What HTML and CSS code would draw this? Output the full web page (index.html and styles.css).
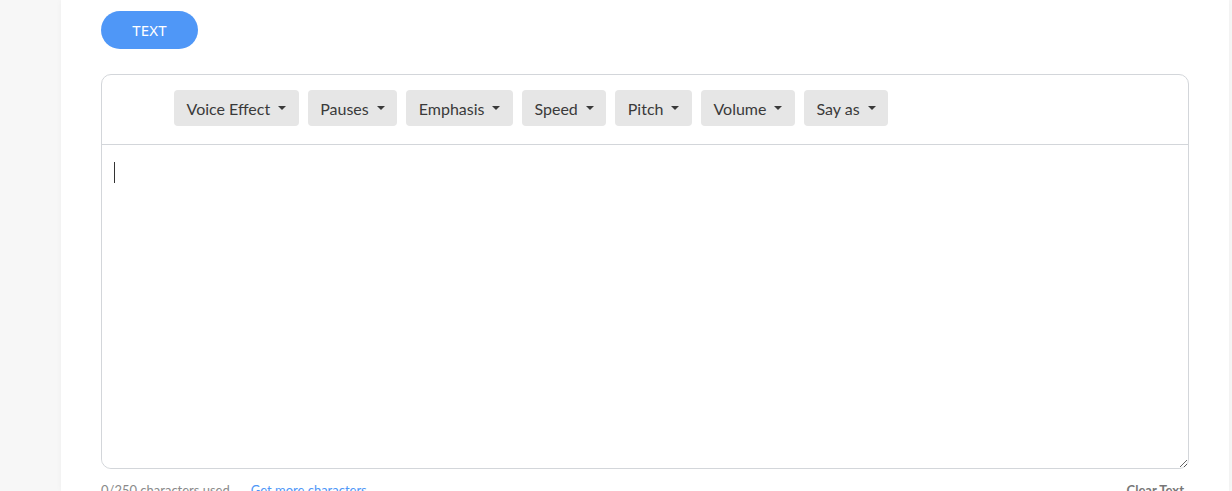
FILE: index.html
```html
<!DOCTYPE html>
<html lang="en">
<head>
<meta charset="utf-8">
<title>Text editor</title>
<link rel="stylesheet" href="styles.css">
</head>
<body>
<div class="page">
  <main class="card">
    <button class="pill" type="button">TEXT</button>
    <section class="editor">
      <div class="toolbar">
        <button class="tool" type="button">Voice Effect<span class="caret"></span></button>
        <button class="tool" type="button">Pauses<span class="caret"></span></button>
        <button class="tool" type="button">Emphasis<span class="caret"></span></button>
        <button class="tool" type="button">Speed<span class="caret"></span></button>
        <button class="tool" type="button">Pitch<span class="caret"></span></button>
        <button class="tool" type="button">Volume<span class="caret"></span></button>
        <button class="tool" type="button">Say as<span class="caret"></span></button>
      </div>
      <div class="body">
        <textarea class="input" autofocus></textarea>
        <span class="cursor"></span>
      </div>
    </section>
    <div class="footer">
      <div class="count">
        <span class="used">0/250 characters used</span>
        <a class="more" href="#">Get more characters</a>
      </div>
      <span class="clear">Clear Text</span>
    </div>
  </main>
</div>
</body>
</html>
```
FILE: styles.css
```css
html, body {
  margin: 0;
  padding: 0;
  height: 100%;
  overflow: hidden;
}
body {
  background: #f7f7f7;
  font-family: Lato, "Noto Sans", sans-serif;
}
.page {
  display: flex;
  padding-left: 61px;
  height: 100%;
}
.card {
  width: 1168px;
  background: #fff;
  box-shadow: 0 0 6px rgba(0, 0, 0, 0.04);
  padding: 11px 40px 0 40px;
  box-sizing: border-box;
  display: flex;
  flex-direction: column;
  align-items: flex-start;
}
.card > * {
  flex-shrink: 0;
}
.pill {
  width: 97px;
  height: 38px;
  border: none;
  border-radius: 19px;
  background: #4f97f7;
  color: #fff;
  font-family: "Noto Sans", sans-serif;
  font-size: 15px;
  letter-spacing: 0.2px;
  cursor: pointer;
}
.editor {
  margin-top: 25px;
  width: 1088px;
  border: 1px solid #d3d6da;
  border-radius: 10px;
  display: flex;
  flex-direction: column;
  box-sizing: border-box;
}
.toolbar {
  display: flex;
  gap: 9px;
  padding: 15px 0 18px 72px;
  border-bottom: 1px solid #d3d6da;
}
.tool {
  height: 36px;
  display: flex;
  align-items: center;
  gap: 8px;
  padding: 0 12.5px;
  border: none;
  border-radius: 4px;
  background: #e6e6e6;
  color: #3a3a3a;
  font-family: Lato, "Noto Sans", sans-serif;
  font-size: 16px;
  cursor: pointer;
}
.caret {
  width: 0;
  height: 0;
  border-left: 4px solid transparent;
  border-right: 4px solid transparent;
  border-top: 4px solid #3a3a3a;
}
.body {
  position: relative;
  display: flex;
  flex-direction: column;
}
.input {
  height: 323px;
  border: none;
  outline: none;
  resize: vertical;
  padding: 16px 12px;
  border-radius: 0 0 10px 10px;
  font-family: Lato, "Noto Sans", sans-serif;
  font-size: 16px;
  color: #333;
  caret-color: #333;
  box-sizing: border-box;
}
.cursor {
  position: absolute;
  left: 12px;
  top: 17px;
  width: 1px;
  height: 21px;
  background: #333;
  pointer-events: none;
}
.footer {
  margin-top: 13px;
  width: 1088px;
  display: flex;
  justify-content: space-between;
  font-size: 13px;
}
.count {
  display: flex;
  gap: 21px;
}
.used {
  color: #8a8a8a;
}
.more {
  color: #4f97f7;
  text-decoration: none;
}
.clear {
  color: #777;
  font-weight: bold;
  padding-right: 5px;
}
```
